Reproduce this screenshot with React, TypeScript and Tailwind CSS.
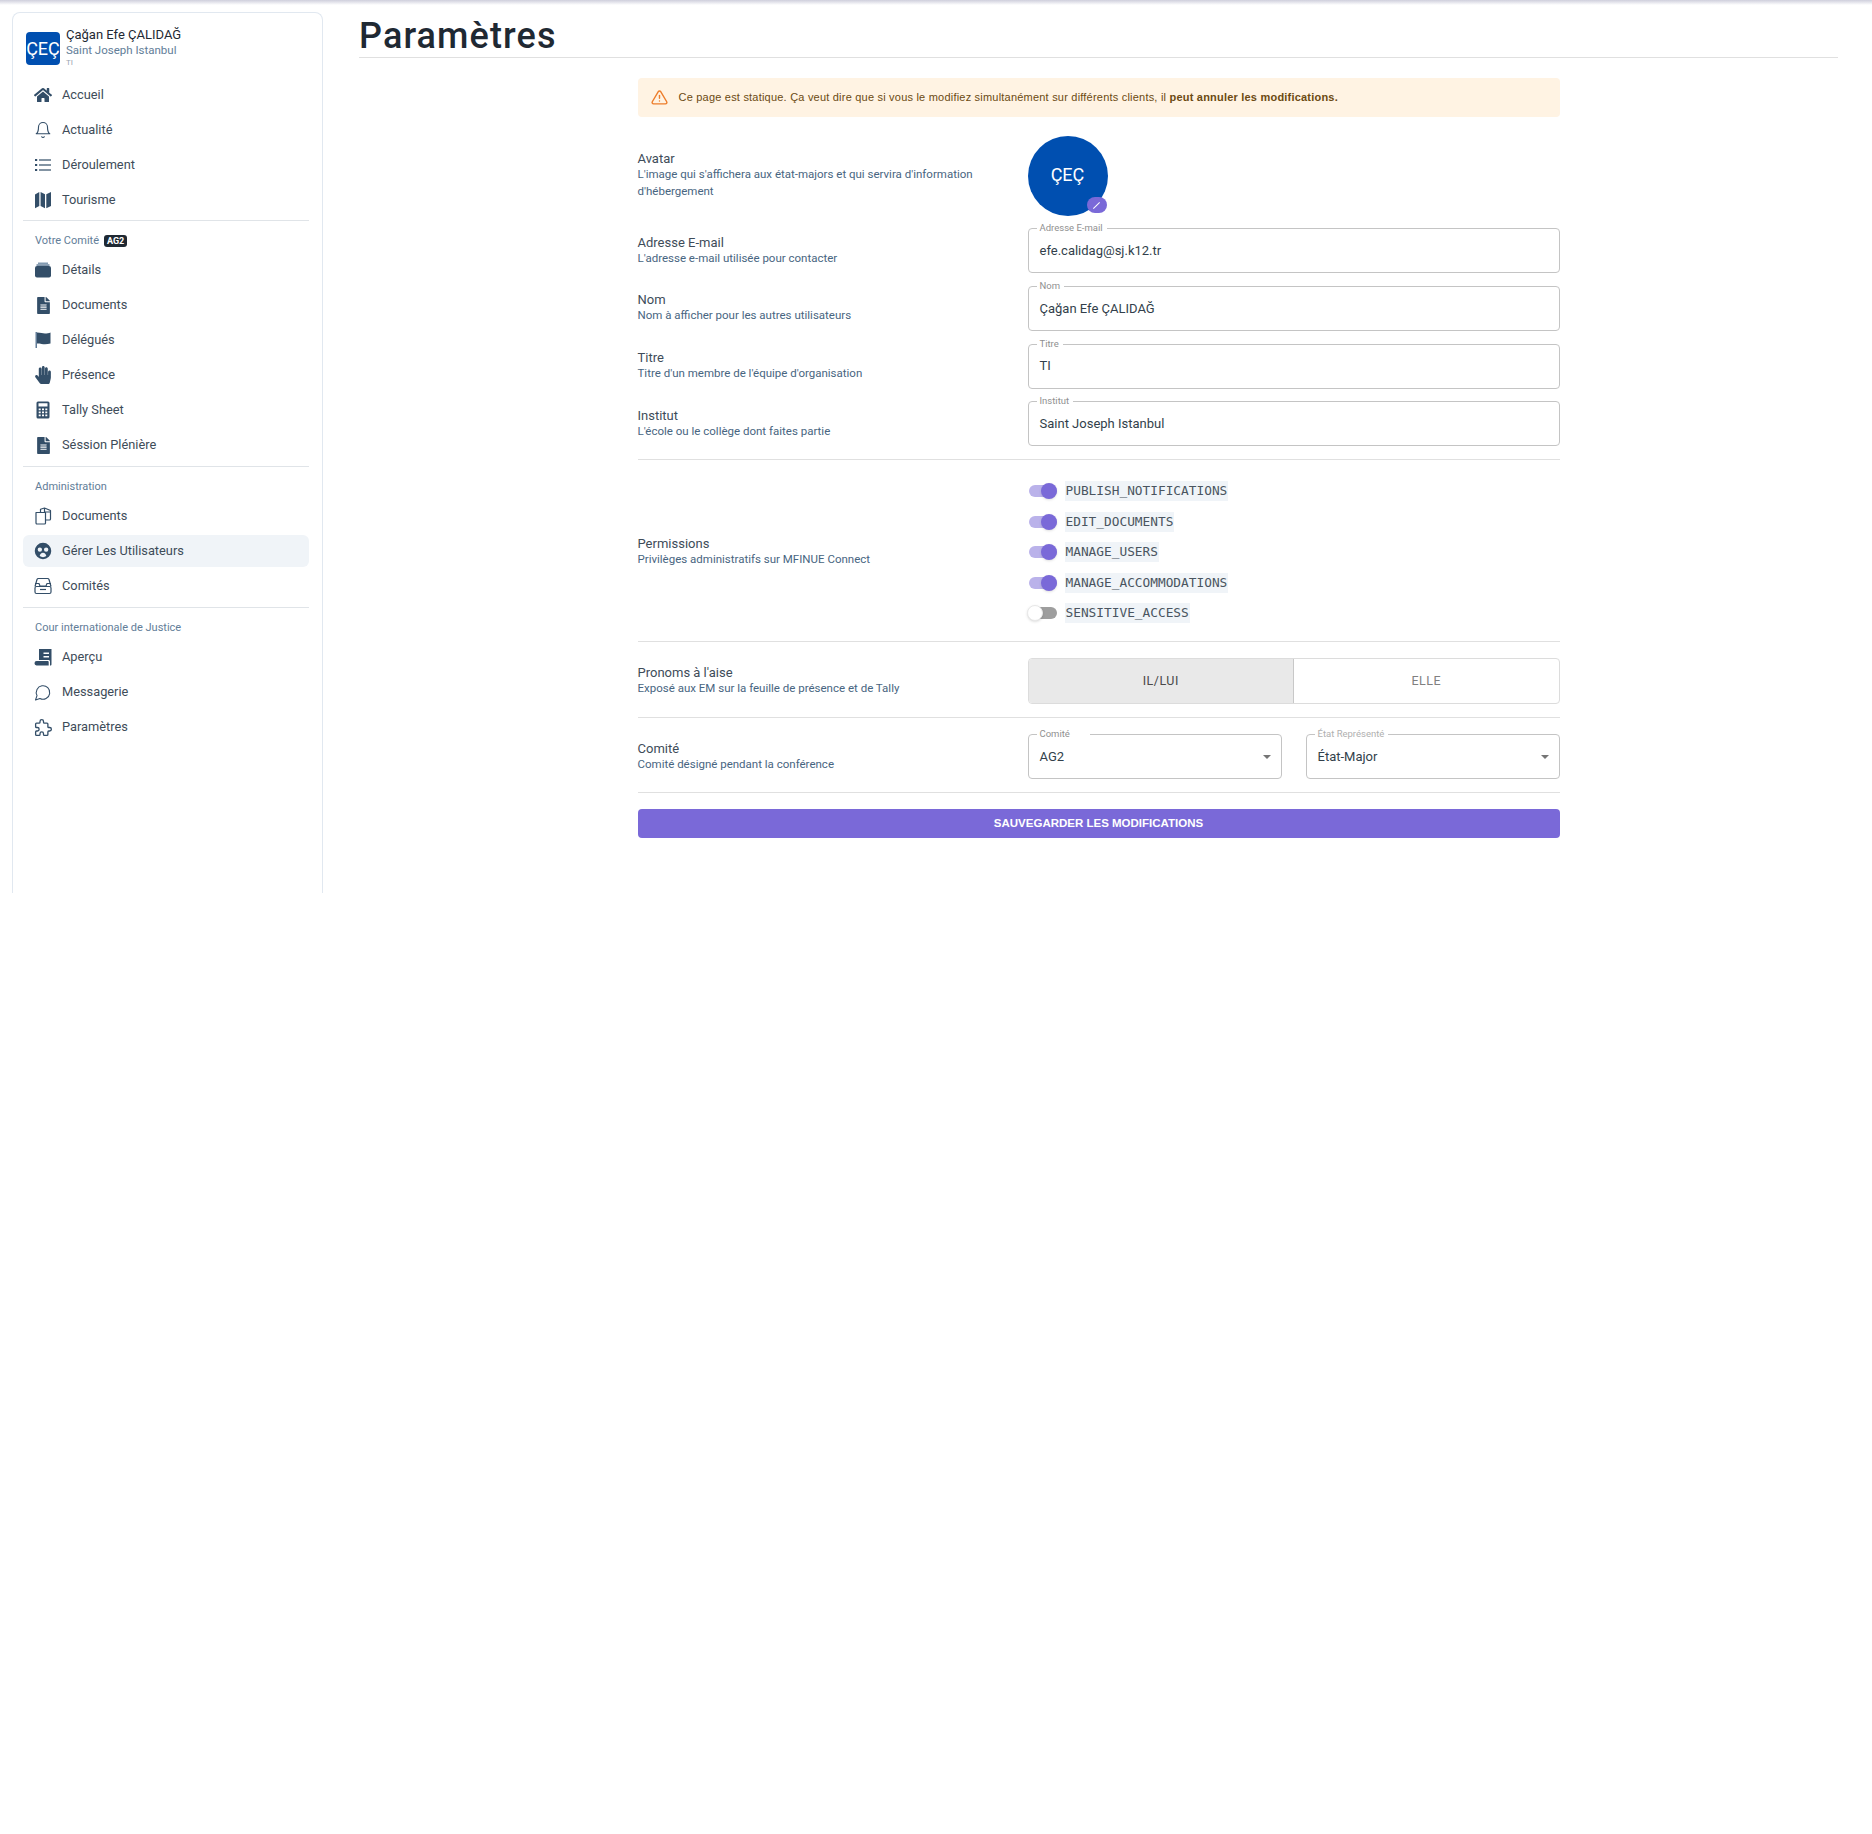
import type { ReactNode } from "react";
import { FaHome, FaFileAlt, FaHandPaper } from "react-icons/fa";
import { TbPuzzle } from "react-icons/tb";
import { FiAlertTriangle, FiBell } from "react-icons/fi";
import { LuMessageCircle } from "react-icons/lu";

const iconCls = "h-[18px] w-[18px]";
const fill = "#334e68";

function ListIcon() {
  return (
    <svg viewBox="0 0 18 18" className={iconCls} fill={fill}>
      <rect x="1" y="3" width="2.200" height="2" />
      <rect x="1" y="8" width="2.200" height="2" />
      <rect x="1" y="13" width="2.200" height="2" />
      <rect x="5" y="3.400" width="12" height="1.200" />
      <rect x="5" y="8.400" width="12" height="1.200" />
      <rect x="5" y="13.400" width="12" height="1.200" />
    </svg>
  );
}

function MapIcon() {
  return (
    <svg viewBox="0 0 18 18" className={iconCls} fill={fill}>
      <path d="M1 3.500 5.300 1v14L1 17.200ZM6.600 1l4.400 2.300v14l-4.400-2.300ZM12.300 3.300 17 1v14l-4.700 2.300Z" />
    </svg>
  );
}

function BoxIcon() {
  return (
    <svg viewBox="0 0 18 18" className={iconCls} fill={fill}>
      <rect x="4" y="1.500" width="10" height="1.500" fill="#829ab1" />
      <rect x="2.500" y="3.300" width="13" height="1.500" fill="#627d98" />
      <rect x="1" y="5" width="16" height="11.500" rx="2" />
    </svg>
  );
}

function FlagIcon() {
  return (
    <svg viewBox="0 0 18 18" className={iconCls} fill={fill}>
      <rect x="1.500" y="1" width="1.500" height="16" fill="#627d98" />
      <path d="M3 1.500c4 0 5.500 1 8 1 2 0 4-.4 5.500-1v11c-2 .5-3.500 .8-5.500.8-2.500 0-4-.8-8-.8Z" />
    </svg>
  );
}

function CalculatorIcon() {
  return (
    <svg viewBox="0 0 18 18" className={iconCls}>
      <path
        fill={fill}
        fillRule="evenodd"
        d="M4 .5h10a1.500 1.500 0 0 1 1.500 1.500v14a1.500 1.500 0 0 1-1.500 1.500H4A1.500 1.500 0 0 1 2.500 16V2A1.500 1.500 0 0 1 4 .5Zm.5 1.700v3.300h9V2.200ZM4.700 7.500v1.800h2V7.500Zm3.300 0v1.800h2V7.500Zm3.300 0v1.800h2V7.500ZM4.700 10.500v1.800h2v-1.800Zm3.300 0v1.800h2v-1.800Zm3.300 0v1.800h2v-1.800ZM4.700 13.500v1.800h2v-1.800Zm3.300 0v1.800h2v-1.800Zm3.300 0v1.800h2v-1.800Z"
      />
    </svg>
  );
}

function FilesIcon() {
  return (
    <svg viewBox="0 0 18 18" className={iconCls} fill="none" stroke={fill} strokeWidth="1.200" strokeLinejoin="round">
      <path d="M2 5.500h4.500v0l5 0V16a1 1 0 0 1-1 1H3a1 1 0 0 1-1-1Z" />
      <path d="M6.500 5.500V2.200L10.500 1 16.500 3.500v8.500a1 1 0 0 1-1 1h-4" />
      <path d="M10.500 1v4l6 0" />
    </svg>
  );
}

function UsersIcon() {
  return (
    <svg viewBox="0 0 24 24" className={iconCls} fill={fill}>
      <path fillRule="evenodd" d="M12 1a11 11 0 1 0 0 22 11 11 0 0 0 0-22ZM7.800 7.200a2.900 2.900 0 1 1 0 5.800 2.900 2.900 0 0 1 0-5.800Zm8.400 0a2.900 2.900 0 1 1 0 5.800 2.900 2.900 0 0 1 0-5.800ZM12 14.200c2.400 0 4 1.600 4.400 4.600-1.300 1-2.800 1.500-4.400 1.500s-3.100-.5-4.400-1.500c.4-3 2-4.600 4.400-4.600Z" />
    </svg>
  );
}

function InboxIcon() {
  return (
    <svg viewBox="0 0 18 18" className={iconCls} fill="none" stroke={fill} strokeWidth="1.200" strokeLinejoin="round">
      <path d="M1 9.500 3 2.500a1.500 1.500 0 0 1 1.400-1h9.200a1.500 1.500 0 0 1 1.400 1l2 7" />
      <rect x="1" y="9.500" width="16" height="7" rx="1.500" />
      <path d="M1 6.500h4l1 2.500h6l1-2.500h4" />
      <path d="M6 12.500h6" />
    </svg>
  );
}

function ScrollIcon() {
  return (
    <svg viewBox="0 0 18 18" className={iconCls} fill={fill}>
      <path fillRule="evenodd" d="M5 1h12.500v15.500c0 .5-.4 1-1 1h-.5V13.500c0-1-.8-1.500-1.500-1.500H5Zm4.500 3.500V6H15V4.500Zm0 3.500v1.500H15V8Z" />
      <path d="M3 13h10.500c.8 0 1.200.5 1.200 1.200v3.300H2.500A2.200 2.200 0 0 1 .5 15.300 2.300 2.300 0 0 1 3 13Z" />
    </svg>
  );
}

function NavRow({ icon, label, active }: { icon: ReactNode; label: string; active?: boolean }) {
  return (
    <div className={`flex h-8 items-center rounded-md pl-[11px] ${active ? "bg-[#f0f4f8]" : ""}`}>
      <span className="flex w-[18px] items-center justify-center text-[18px] text-[#334e68]">{icon}</span>
      <span className="ml-[10px] text-[12.8px] text-[#3e4c59]">{label}</span>
    </div>
  );
}

function NavSection({ title, badge, children }: { title: string; badge?: string; children: ReactNode }) {
  return (
    <div className="mt-[5px] border-t border-[#e0e4e8]">
      <div className="flex h-[33px] items-center gap-[5px] pl-[12px] pt-[7px] text-[11px] text-[#627d98]">
        {title}
        {badge && <span className="rounded-[3px] bg-[#1f2933] px-[3px] text-[9px] leading-3 font-bold text-white">{badge}</span>}
      </div>
      <div className="flex flex-col gap-[3px]">{children}</div>
    </div>
  );
}

function Sidebar() {
  return (
    <aside className="ml-3 mt-3 h-[881px] w-[311px] shrink-0 rounded-t-lg border-x border-t border-[#e1e8f0] pl-[10px] pr-[13px]">
      <div className="ml-[3px] mt-[19px] flex h-[46px] items-start">
        <div className="flex h-[33px] w-[34px] items-center justify-center overflow-hidden rounded bg-[#004fb0] text-[18px] text-white">ÇEÇ</div>
        <div className="ml-[6px] -mt-[5px] flex flex-col">
          <span className="text-[13px] leading-[16px] text-[#1f2933]">Çağan Efe ÇALIDAĞ</span>
          <span className="text-[11.5px] leading-[14px] text-[#627d98]">Saint Joseph Istanbul</span>
          <span className="text-[8px] leading-[11px] text-[#9aa5b1]">TI</span>
        </div>
      </div>
      <div className="-mb-px flex flex-col gap-[3px] pt-px">
        <NavRow icon={<FaHome />} label="Accueil" />
        <NavRow icon={<FiBell className="stroke-[1.5]" />} label="Actualité" />
        <NavRow icon={<ListIcon />} label="Déroulement" />
        <NavRow icon={<MapIcon />} label="Tourisme" />
      </div>
      <NavSection title="Votre Comité" badge="AG2">
        <NavRow icon={<BoxIcon />} label="Détails" />
        <NavRow icon={<FaFileAlt className="h-[17px] w-[17px]" />} label="Documents" />
        <NavRow icon={<FlagIcon />} label="Délégués" />
        <NavRow icon={<FaHandPaper />} label="Présence" />
        <NavRow icon={<CalculatorIcon />} label="Tally Sheet" />
        <NavRow icon={<FaFileAlt className="h-[17px] w-[17px]" />} label="Séssion Plénière" />
      </NavSection>
      <NavSection title="Administration">
        <NavRow icon={<FilesIcon />} label="Documents" />
        <NavRow icon={<UsersIcon />} label="Gérer Les Utilisateurs" active />
        <NavRow icon={<InboxIcon />} label="Comités" />
      </NavSection>
      <NavSection title="Cour internationale de Justice">
        <NavRow icon={<ScrollIcon />} label="Aperçu" />
        <NavRow icon={<LuMessageCircle className="h-[19px] w-[19px] stroke-[1.4]" />} label="Messagerie" />
        <NavRow icon={<TbPuzzle className="h-[21px] w-[21px] shrink-0 stroke-[1.5]" />} label="Paramètres" />
      </NavSection>
    </aside>
  );
}

function FieldLabel({ title, lines }: { title: string; lines: string }) {
  return (
    <div className="w-[390px] shrink-0 pr-[52px]">
      <div className="text-[13px] leading-[15px] text-[#3e4c59]">{title}</div>
      <div className="text-[11.5px] leading-[17px] text-[#486581]">{lines}</div>
    </div>
  );
}

function Outlined({ label, value, select, dim, wide }: { label: string; value: string; select?: boolean; dim?: boolean; wide?: boolean }) {
  return (
    <div className="relative flex h-[45px] flex-1 items-center rounded border border-[#c4c4c4] px-[11px] text-[13px] text-[#323f4b]">
      <span className={`absolute -top-[7px] left-[8px] bg-white pl-[3px] text-[9.5px] leading-3 ${wide ? "pr-[20px]" : "pr-[4px]"} ${dim ? "text-[#b0b0b0]" : "text-[#909090]"}`}>{label}</span>
      {value}
      {select && <span className="absolute right-[10px] top-[20px] border-x-[4px] border-t-[4px] border-x-transparent border-t-[#757575]" />}
    </div>
  );
}

function TextRow({ title, sub, label, value }: { title: string; sub: string; label: string; value: string }) {
  return (
    <div className="flex h-[45px] items-center">
      <FieldLabel title={title} lines={sub} />
      <Outlined label={label} value={value} />
    </div>
  );
}

function Perm({ name, on }: { name: string; on: boolean }) {
  return (
    <div className="flex h-[20px] items-center">
      <div className="relative ml-px h-[12px] w-[28px]">
        <div className={`h-[12px] w-[28px] rounded-full ${on ? "bg-[#bab2ea]" : "bg-[#9e9e9e]"}`} />
        <div className={`absolute -top-[2px] h-4 w-4 rounded-full shadow-sm ${on ? "right-0 bg-[#7a69d8]" : "-left-[2px] border border-[#e8e8e8] bg-white"}`} />
      </div>
      <code className="ml-[8px] bg-[#f0f4f8] px-px font-['DejaVu_Sans_Mono',monospace] text-[12.8px] leading-[20px] text-[#4a5560]">{name}</code>
    </div>
  );
}

function Rule({ mt }: { mt: string }) {
  return <div className={`border-t border-[#e0e0e0] ${mt}`} />;
}

export default function App() {
  return (
    <div className="relative min-h-[1834px] bg-white font-['Roboto',sans-serif]">
      <div className="absolute inset-x-0 top-0 h-[5px] bg-gradient-to-b from-[#cfcfdc] to-white" />
      <div className="flex">
        <Sidebar />
        <main className="ml-[36px] w-[1479px] shrink-0">
          <h1 className="mt-[14px] h-[44px] border-b border-[#e0e0e0] text-[36px] leading-[44px] font-medium tracking-[1.1px] text-[#1f2933]">Paramètres</h1>
          <div className="mx-auto w-[922px]">
            <div className="mt-[20px] flex h-[39px] items-center rounded bg-[#fff3e3] pl-[13px] font-['Liberation_Sans',sans-serif] text-[11px] tracking-[0.21px] text-[#6b4a12]">
              <FiAlertTriangle className="h-[17px] w-[17px] text-[#ed7d2b]" />
              <span className="ml-[11px]">
                Ce page est statique. Ça veut dire que si vous le modifiez simultanément sur différents clients, il <b>peut annuler les modifications.</b>
              </span>
            </div>
            <div className="mt-[19px] flex h-[80px] items-center">
              <div className="pb-[2px]">
                <FieldLabel title="Avatar" lines="L'image qui s'affichera aux état-majors et qui servira d'information d'hébergement" />
              </div>
              <div className="relative flex h-[80px] w-[80px] items-center justify-center rounded-full bg-[#004fb0] pb-[3px] text-[18px] text-white">
                ÇEÇ
                <div className="absolute bottom-[3px] right-[1px] flex h-4 w-5 items-center justify-center rounded-full bg-[#7a69d8]">
                  <div className="h-[9px] w-px rotate-45 bg-white" />
                </div>
              </div>
            </div>
            <div className="mt-[12px] flex flex-col gap-[12.75px]">
              <TextRow title="Adresse E-mail" sub="L'adresse e-mail utilisée pour contacter" label="Adresse E-mail" value="efe.calidag@sj.k12.tr" />
              <TextRow title="Nom" sub="Nom à afficher pour les autres utilisateurs" label="Nom" value="Çağan Efe ÇALIDAĞ" />
              <TextRow title="Titre" sub="Titre d'un membre de l'équipe d'organisation" label="Titre" value="TI" />
              <TextRow title="Institut" sub="L'école ou le collège dont faites partie" label="Institut" value="Saint Joseph Istanbul" />
            </div>
            <Rule mt="mt-[13px]" />
            <div className="mt-[15px] flex h-[154px] items-center">
              <FieldLabel title="Permissions" lines="Privilèges administratifs sur MFINUE Connect" />
              <div className="flex flex-col gap-[10.5px]">
                <Perm name="PUBLISH_NOTIFICATIONS" on />
                <Perm name="EDIT_DOCUMENTS" on />
                <Perm name="MANAGE_USERS" on />
                <Perm name="MANAGE_ACCOMMODATIONS" on />
                <Perm name="SENSITIVE_ACCESS" on={false} />
              </div>
            </div>
            <Rule mt="mt-[12px]" />
            <div className="mt-[16px] flex h-[46px] items-center">
              <FieldLabel title="Pronoms à l'aise" lines="Exposé aux EM sur la feuille de présence et de Tally" />
              <div className="flex h-[46px] flex-1 overflow-hidden rounded border border-[#dcdcdc] text-[12.5px] tracking-[0.5px]">
                <div className="flex flex-1 items-center justify-center border-r border-[#c8c8c8] bg-[#e9e9e9] text-[#4a4a4a]">IL/LUI</div>
                <div className="flex flex-1 items-center justify-center text-[#808080]">ELLE</div>
              </div>
            </div>
            <Rule mt="mt-[13px]" />
            <div className="mt-[16px] flex h-[45px] items-center">
              <FieldLabel title="Comité" lines="Comité désigné pendant la conférence" />
              <div className="flex flex-1 gap-[24px]">
                <Outlined label="Comité" value="AG2" select wide />
                <Outlined label="État Représenté" value="État-Major" select dim />
              </div>
            </div>
            <Rule mt="mt-[13px]" />
            <button className="mt-[16px] flex h-[29px] w-full items-center justify-center rounded bg-[#7a69d8] font-['Liberation_Sans',sans-serif] text-[11.5px] font-bold text-white">
              SAUVEGARDER LES MODIFICATIONS
            </button>
          </div>
        </main>
      </div>
    </div>
  );
}
